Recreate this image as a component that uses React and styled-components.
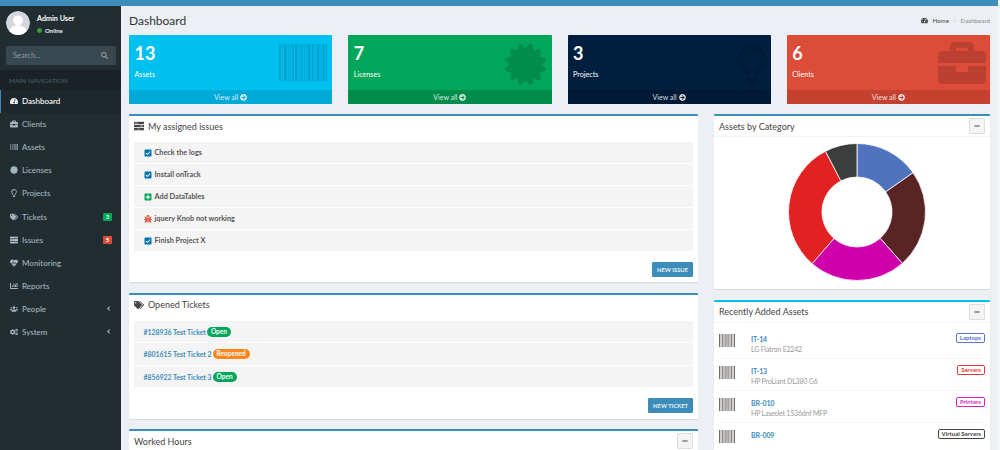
import React from "react";
import styled, { createGlobalStyle } from "styled-components";
import {
  FaTachometerAlt,
  FaBriefcase,
  FaBarcode,
  FaCertificate,
  FaRegLightbulb,
  FaTags,
  FaHeartbeat,
  FaChartBar,
  FaUsers,
  FaCogs,
  FaAngleLeft,
  FaSearch,
  FaCheckSquare,
  FaPlusSquare,
  FaBug,
  FaArrowCircleRight,
  FaMinus,
  FaCircle,
} from "react-icons/fa";

const GlobalStyle = createGlobalStyle`
  html, body {
    margin: 0;
    height: 450px;
    overflow: hidden;
    background: #ecf0f5;
    font-family: "Lato", "Noto Sans", sans-serif;
  }
  * { box-sizing: border-box; }
`;

// stacked bars, the old font-awesome "tasks" glyph
const TasksIcon = ({ size = 8, color = "currentColor" }) => (
  <svg width={size} height={size} viewBox="0 0 10 10" fill={color}>
    <path d="M0 .8h10v2.300H0z" />
    <path d="M0 3.900h10v2.300H0z" />
    <path d="M0 7h10v2.300H0z" />
    <path d="M1 1.500h3v.9H1zM6 4.600h3v.9H6zM3 7.700h3v.9H3z" fill="#fff" fillOpacity="0.55" />
  </svg>
);

const navItems = [
  { icon: FaTachometerAlt, label: "Dashboard", active: true },
  { icon: FaBriefcase, label: "Clients" },
  { icon: FaBarcode, label: "Assets" },
  { icon: FaCertificate, label: "Licenses" },
  { icon: FaRegLightbulb, label: "Projects" },
  { icon: FaTags, label: "Tickets", badge: "3", badgeColor: "#00a65a" },
  { icon: TasksIcon, label: "Issues", badge: "5", badgeColor: "#dd4b39" },
  { icon: FaHeartbeat, label: "Monitoring" },
  { icon: FaChartBar, label: "Reports" },
  { icon: FaUsers, label: "People", arrow: true },
  { icon: FaCogs, label: "System", arrow: true },
];

const stats = [
  { value: "13", label: "Assets", bg: "#00c0ef", foot: "#00a9d6", shade: "#00a3d0", art: "barcode", top: 3, right: 0 },
  { value: "7", label: "Licenses", bg: "#00a65a", foot: "#008d4c", shade: "#008d4c", art: "certificate", top: 3, right: 1 },
  { value: "3", label: "Projects", bg: "#001f3f", foot: "#001a35", shade: "#001a36", art: "bulb", top: 4, right: -6 },
  { value: "6", label: "Clients", bg: "#dd4b39", foot: "#c44130", shade: "#bc4031", art: "briefcase", top: -2, right: -1 },
];

const issues = [
  { icon: FaCheckSquare, color: "#0073b7", text: "Check the logs" },
  { icon: FaCheckSquare, color: "#0073b7", text: "Install onTrack" },
  { icon: FaPlusSquare, color: "#00a65a", text: "Add DataTables" },
  { icon: FaBug, color: "#dd4b39", text: "jquery Knob not working" },
  { icon: FaCheckSquare, color: "#0073b7", text: "Finish Project X" },
];

const tickets = [
  { text: "#128936 Test Ticket", status: "Open", color: "#00a65a" },
  { text: "#801615 Test Ticket 2", status: "Reopened", color: "#ff851b" },
  { text: "#856922 Test Ticket 3", status: "Open", color: "#00a65a" },
];

const assets = [
  { tag: "IT-14", name: "LG Flatron E2242", cat: "Laptops", color: "#5b74c9" },
  { tag: "IT-13", name: "HP ProLiant DL380 G6", cat: "Servers", color: "#e23a3a" },
  { tag: "BR-010", name: "HP LaserJet 1536dnf MFP", cat: "Printers", color: "#d81fc0" },
  { tag: "BR-009", name: "", cat: "Virtual Servers", color: "#444" },
];

const slices = [
  { from: 0, to: 55, color: "#5073c0" },
  { from: 55, to: 138.6, color: "#582424" },
  { from: 138.6, to: 221, color: "#cf00ab" },
  { from: 221, to: 332.6, color: "#e22222" },
  { from: 332.6, to: 360, color: "#3c3d3d" },
];

const bars = [2, 1, 3, 1, 1, 2, 3, 1, 2, 1, 1, 3, 2, 1, 3, 1, 2, 2, 1, 3, 1, 2, 3];
const stripeColors = ["#6f6a66", "#b39c88", "#7c8fa3", "#8a8178", "#a9a29a"];

const polar = (r, deg) => {
  const a = ((deg - 90) * Math.PI) / 180;
  return `${(r * Math.cos(a)).toFixed(2)} ${(r * Math.sin(a)).toFixed(2)}`;
};

const slicePath = (from, to, R, r) => {
  const large = to - from > 180 ? 1 : 0;
  return `M${polar(R, from)}A${R} ${R} 0 ${large} 1 ${polar(R, to)}L${polar(r, to)}A${r} ${r} 0 ${large} 0 ${polar(r, from)}Z`;
};

const Barcode = ({ w, h, color }) => {
  let x = 0;
  return (
    <svg width={w} height={h} viewBox="0 0 48 37">
      {bars.map((b, i) => {
        const rect = <rect key={i} x={x} y="0" width={b * 0.9} height="37" fill={color} />;
        x += b * 0.9 + 1.15;
        return rect;
      })}
    </svg>
  );
};

const SmallBarcode = () => (
  <svg width="16" height="13" viewBox="0 0 16 13">
    {Array.from({ length: 11 }, (_, i) => (
      <rect key={i} x={i * 1.5} y="0" width="1" height="13" fill={stripeColors[i % 5]} />
    ))}
  </svg>
);

const StatArt = ({ kind, color }) => {
  if (kind === "barcode") return <Barcode w={48} h={37} color={color} />;
  if (kind === "certificate") return <FaCertificate size={41} color={color} />;
  if (kind === "bulb") return <FaRegLightbulb size={40} color={color} />;
  return <FaBriefcase size={48} color={color} />;
};

const App = () => (
  <>
    <GlobalStyle />
    <Page>
      <TopBar />
      <Shell>
        <Sidebar>
          <UserPanel>
            <Avatar>
              <svg width="24" height="24" viewBox="0 0 24 24">
                <circle cx="12" cy="12" r="12" fill="#d2d6de" />
                <circle cx="12" cy="9.5" r="5" fill="#fff" />
                <path d="M3 21c1-5 5-6.500 9-6.500s8 1.500 9 6.500a12 12 0 0 1-18 0Z" fill="#fff" />
              </svg>
            </Avatar>
            <UserInfo>
              <UserName>Admin User</UserName>
              <UserStatus>
                <FaCircle size={5} color="#3c9b3c" />
                Online
              </UserStatus>
            </UserInfo>
          </UserPanel>
          <SearchBox>
            <span>Search...</span>
            <FaSearch size={7} color="#999" />
          </SearchBox>
          <NavHeader>MAIN NAVIGATION</NavHeader>
          {navItems.map(({ icon: Icon, label, active, badge, badgeColor, arrow }) => (
            <NavItem key={label} $active={active}>
              <NavIcon>
                <Icon size={8} />
              </NavIcon>
              <NavLabel>{label}</NavLabel>
              {badge && <NavBadge $color={badgeColor}>{badge}</NavBadge>}
              {arrow && <FaAngleLeft size={7} />}
            </NavItem>
          ))}
        </Sidebar>
        <Main>
          <PageHead>
            <PageTitle>Dashboard</PageTitle>
            <Breadcrumb>
              <FaTachometerAlt size={7} color="#444" />
              <BreadHome>Home</BreadHome>
              <BreadSep>&gt;</BreadSep>
              <span>Dashboard</span>
            </Breadcrumb>
          </PageHead>
          <StatRow>
            {stats.map((s) => (
              <StatBox key={s.label} $bg={s.bg}>
                <StatInner>
                  <div>
                    <StatValue>{s.value}</StatValue>
                    <StatLabel>{s.label}</StatLabel>
                  </div>
                  <StatArtWrap $top={s.top} $right={s.right}>
                    <StatArt kind={s.art} color={s.shade} />
                  </StatArtWrap>
                </StatInner>
                <StatFoot $bg={s.foot}>
                  View all <FaArrowCircleRight size={7} />
                </StatFoot>
              </StatBox>
            ))}
          </StatRow>
          <Columns>
            <Column>
              <Box $h={168.3}>
                <BoxHead>
                  <TasksIcon size={10} color="#444" />
                  <BoxTitle>My assigned issues</BoxTitle>
                </BoxHead>
                <List>
                  {issues.map(({ icon: Icon, color, text }) => (
                    <ListRow key={text}>
                      <IssueIcon>
                        <Icon size={8} color={color} />
                      </IssueIcon>
                      <IssueText>{text}</IssueText>
                    </ListRow>
                  ))}
                </List>
                <BoxFoot>
                  <ActionButton>NEW ISSUE</ActionButton>
                </BoxFoot>
              </Box>
              <Box $h={125.7}>
                <BoxHead>
                  <FaTags size={10} color="#444" />
                  <BoxTitle>Opened Tickets</BoxTitle>
                </BoxHead>
                <List>
                  {tickets.map((t) => (
                    <ListRow key={t.text} $h={21.5}>
                      <TicketLink>{t.text}</TicketLink>
                      <Pill $color={t.color}>{t.status}</Pill>
                    </ListRow>
                  ))}
                </List>
                <BoxFoot>
                  <ActionButton>NEW TICKET</ActionButton>
                </BoxFoot>
              </Box>
              <Box>
                <BoxHead $between>
                  <BoxTitle>Worked Hours</BoxTitle>
                  <MinButton>
                    <FaMinus size={6} />
                  </MinButton>
                </BoxHead>
              </Box>
            </Column>
            <Column>
              <Box $h={175}>
                <BoxHead $between $ruled>
                  <BoxTitle>Assets by Category</BoxTitle>
                  <MinButton>
                    <FaMinus size={6} />
                  </MinButton>
                </BoxHead>
                <ChartWrap>
                  <svg width="138" height="138" viewBox="-69 -69 138 138">
                    {slices.map((s) => (
                      <path
                        key={s.color}
                        d={slicePath(s.from, s.to, 68.5, 35)}
                        fill={s.color}
                        stroke="#fff"
                        strokeWidth="0.8"
                      />
                    ))}
                  </svg>
                </ChartWrap>
              </Box>
              <Box $accent="#00c0ef">
                <BoxHead $between $ruled>
                  <BoxTitle>Recently Added Assets</BoxTitle>
                  <MinButton>
                    <FaMinus size={6} />
                  </MinButton>
                </BoxHead>
                <AssetList>
                  {assets.map((a) => (
                    <AssetRow key={a.tag}>
                      <SmallBarcode />
                      <AssetInfo>
                        <AssetTag>{a.tag}</AssetTag>
                        <AssetName>{a.name}</AssetName>
                      </AssetInfo>
                      <CatLabel $color={a.color}>{a.cat}</CatLabel>
                    </AssetRow>
                  ))}
                </AssetList>
              </Box>
            </Column>
          </Columns>
        </Main>
      </Shell>
    </Page>
  </>
);

const Page = styled.div`
  width: 1000px;
  height: 450px;
  padding-right: 2px;
  overflow: hidden;
  display: flex;
  flex-direction: column;
  background: #f6f6f6;
`;

const TopBar = styled.div`
  height: 6px;
  flex: none;
  background: #3c8dbc;
`;

const Shell = styled.div`
  flex: 1;
  display: flex;
  min-height: 0;
`;

const Sidebar = styled.aside`
  width: 121px;
  flex: none;
  background: #222d32;
`;

const UserPanel = styled.div`
  display: flex;
  align-items: flex-start;
  height: 40px;
  padding: 5px 0 0 6px;
`;

const Avatar = styled.div`
  width: 24px;
  height: 24px;
  border-radius: 50%;
  overflow: hidden;
`;

const UserInfo = styled.div`
  margin-left: 7px;
  padding-top: 2px;
`;

const UserName = styled.div`
  font-size: 7.2px;
  font-weight: 700;
  line-height: 11px;
  color: #fff;
`;

const UserStatus = styled.div`
  display: flex;
  align-items: center;
  gap: 3px;
  margin-top: 2px;
  font-size: 6px;
  font-weight: 700;
  line-height: 9px;
  color: #e8eef0;
`;

const SearchBox = styled.div`
  display: flex;
  align-items: center;
  justify-content: space-between;
  height: 19px;
  margin: 0 5px 0 6px;
  padding: 0 8px 0 7px;
  border-radius: 2px;
  background: #374850;
  font-size: 7.5px;
  color: #8f9ba1;
`;

const NavHeader = styled.div`
  height: 19.5px;
  margin-top: 5px;
  padding: 6px 0 0 9px;
  background: #1a2226;
  font-size: 6.5px;
  line-height: 9px;
  color: #4b646f;
`;

const NavItem = styled.div`
  display: flex;
  align-items: center;
  height: 23.1px;
  padding: 0 9px 0 9px;
  border-left: 1px solid ${(p) => (p.$active ? "#3c8dbc" : "transparent")};
  background: ${(p) => (p.$active ? "#1e282c" : "transparent")};
  font-size: 8px;
  font-weight: 500;
  color: ${(p) => (p.$active ? "#fff" : "#a3b5bd")};
`;

const NavIcon = styled.span`
  display: inline-flex;
  width: 12px;
`;

const NavLabel = styled.span`
  flex: 1;
`;

const NavBadge = styled.span`
  width: 9px;
  height: 8px;
  border-radius: 1px;
  background: ${(p) => p.$color};
  font-size: 6px;
  font-weight: 700;
  line-height: 8px;
  text-align: center;
  color: #fff;
`;

const Main = styled.main`
  flex: 1;
  min-width: 0;
  padding: 0 8px;
  background: #ecf0f5;
`;

const PageHead = styled.div`
  display: flex;
  align-items: center;
  justify-content: space-between;
  height: 29px;
`;

const PageTitle = styled.h1`
  margin: 0;
  font-size: 12px;
  font-weight: 400;
  color: #333;
`;

const Breadcrumb = styled.div`
  display: flex;
  align-items: center;
  gap: 3px;
  font-size: 6.2px;
  color: #888;
`;

const BreadHome = styled.span`
  margin-left: 1px;
  color: #444;
`;

const BreadSep = styled.span`
  margin: 0 1px;
  color: #ccc;
`;

const StatRow = styled.div`
  display: grid;
  grid-template-columns: repeat(4, 1fr);
  grid-template-rows: 69px;
  gap: 16px;
`;

const StatBox = styled.div`
  display: flex;
  flex-direction: column;
  min-height: 0;
  border-radius: 1px;
  background: ${(p) => p.$bg};
  color: #fff;
`;

const StatInner = styled.div`
  flex: 1;
  display: flex;
  justify-content: space-between;
  min-height: 0;
  padding: 6px 5px 0 5.5px;
`;

const StatValue = styled.div`
  font-size: 18px;
  font-weight: 700;
  line-height: 24px;
`;

const StatLabel = styled.div`
  margin-top: 4px;
  font-size: 7.2px;
  line-height: 11px;
`;

const StatArtWrap = styled.div`
  height: 0;
  margin-top: ${(p) => p.$top}px;
  margin-right: ${(p) => p.$right}px;
`;

const StatFoot = styled.div`
  display: flex;
  flex: none;
  align-items: center;
  justify-content: center;
  gap: 2px;
  height: 14px;
  background: ${(p) => p.$bg};
  font-size: 7px;
  color: rgba(255, 255, 255, 0.85);
`;

const Columns = styled.div`
  display: grid;
  grid-template-columns: 569px 276px;
  gap: 16px;
  margin-top: 10px;
`;

const Column = styled.div`
  display: flex;
  flex-direction: column;
  gap: 10.7px;
`;

const Box = styled.section`
  flex: none;
  height: ${(p) => (p.$h ? `${p.$h}px` : "auto")};
  padding-bottom: 5px;
  border-top: 2px solid ${(p) => p.$accent || "#3c8dbc"};
  border-radius: 1px;
  background: #fff;
  box-shadow: 0 1px 1px rgba(0, 0, 0, 0.1);
`;

const BoxHead = styled.div`
  display: flex;
  align-items: center;
  justify-content: ${(p) => (p.$between ? "space-between" : "flex-start")};
  gap: 4px;
  height: 21px;
  padding: 0 5px;
  border-bottom: 1px solid ${(p) => (p.$ruled ? "#f4f4f4" : "transparent")};
`;

const BoxTitle = styled.h3`
  margin: 0;
  font-size: 9px;
  font-weight: 400;
  color: #444;
`;

const MinButton = styled.button`
  display: flex;
  align-items: center;
  justify-content: center;
  width: 16px;
  height: 16px;
  padding: 0;
  border: 1px solid #ddd;
  border-radius: 1px;
  background: #f4f4f4;
  color: #444;
`;

const List = styled.div`
  display: flex;
  flex-direction: column;
  gap: 1px;
  padding: 5px 5px 0;
`;

const ListRow = styled.div`
  display: flex;
  align-items: center;
  height: ${(p) => p.$h || 21}px;
  padding-left: 8.5px;
  border-left: 1px solid #f0f0f0;
  background: #f4f4f4;
`;

const IssueIcon = styled.span`
  display: inline-flex;
  width: 11px;
`;

const IssueText = styled.span`
  font-size: 7.3px;
  font-weight: 700;
  color: #555;
`;

const TicketLink = styled.span`
  font-size: 6.9px;
  font-weight: 700;
  color: #3c8dbc;
`;

const Pill = styled.span`
  margin-left: 1px;
  padding: 0 4px;
  border-radius: 5px;
  background: ${(p) => p.$color};
  font-size: 6.5px;
  font-weight: 700;
  line-height: 10px;
  color: #fff;
`;

const BoxFoot = styled.div`
  display: flex;
  justify-content: flex-end;
  padding: 11px 5px 0;
`;

const ActionButton = styled.button`
  height: 15px;
  padding: 0 4px;
  border: 1px solid #3f8bb8;
  border-radius: 1px;
  background: #3c8dbc;
  font-family: inherit;
  font-size: 5.8px;
  font-weight: 700;
  color: #e8f1f6;
`;

const ChartWrap = styled.div`
  display: flex;
  justify-content: center;
  padding: 6px 0 0 9px;

  svg {
    display: block;
  }
`;

const AssetList = styled.div`
  padding: 4px 5px 0;
`;

const AssetRow = styled.div`
  display: flex;
  align-items: flex-start;
  height: 32px;
  padding-top: 7px;
  border-bottom: 1px solid #f4f4f4;
`;

const AssetInfo = styled.div`
  flex: 1;
  margin-left: 16px;
`;

const AssetTag = styled.div`
  font-size: 7px;
  font-weight: 700;
  line-height: 10px;
  letter-spacing: -0.1px;
  color: #3c8dbc;
`;

const AssetName = styled.div`
  font-size: 7px;
  line-height: 11px;
  letter-spacing: -0.2px;
  color: #999;
`;

const CatLabel = styled.span`
  margin-top: -1px;
  padding: 0 3px;
  border: 1px solid ${(p) => p.$color};
  border-radius: 2px;
  font-size: 6px;
  font-weight: 700;
  line-height: 8px;
  color: ${(p) => p.$color};
`;

export default App;
